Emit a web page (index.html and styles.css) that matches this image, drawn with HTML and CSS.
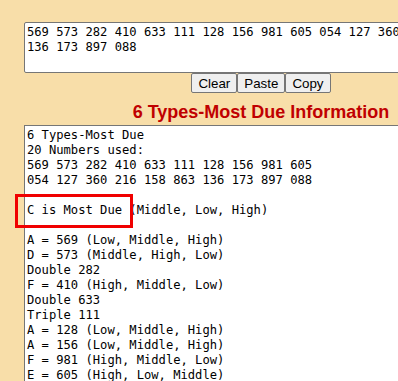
FILE: index.html
```html
<!DOCTYPE html>
<html lang="en">
<head>
  <meta charset="UTF-8" />
  <meta name="viewport" content="width=device-width, initial-scale=1.0"/>
  <title>6 Types-Most Due</title>
  <link rel="stylesheet" href="styles.css">
</head>
<body>
  <div class="container">
    <textarea class="numbers" id="numbers" spellcheck="false">569 573 282 410 633 111 128 156 981 605 054 127 360 216 158 863 136 173 897 088</textarea>

    <div class="buttons">
      <button onclick="document.getElementById('numbers').value = ''">Clear</button>
      <button>Paste</button>
      <button>Copy</button>
    </div>

    <h2>6 Types-Most Due Information</h2>

    <div class="output-wrap">
      <div class="output">6 Types-Most Due
20 Numbers used:
569 573 282 410 633 111 128 156 981 605
054 127 360 216 158 863 136 173 897 088

C is Most Due (Middle, Low, High)

A = 569 (Low, Middle, High)
D = 573 (Middle, High, Low)
Double 282
F = 410 (High, Middle, Low)
Double 633
Triple 111
A = 128 (Low, Middle, High)
A = 156 (Low, Middle, High)
F = 981 (High, Middle, Low)
E = 605 (High, Low, Middle)</div>
      <div class="highlight"></div>
    </div>
  </div>
</body>
</html>
```

FILE: styles.css
```css
:root {
  --bg: #f8dea9;
  --title: #c00000;
  --border: #767676;
  --mark: #f00000;
}

body {
  margin: 0;
  background-color: var(--bg);
  font-family: "Liberation Sans", Arial, sans-serif;
  overflow: hidden;
}

.container {
  width: 474px;
  padding: 22px 0 0 24px;
}

.numbers, .output {
  display: block;
  width: 100%;
  box-sizing: border-box;
  margin: 0;
  padding: 2px;
  border: 1px solid var(--border);
  background: #fff;
  color: #000;
  font-family: "DejaVu Sans Mono", monospace;
  font-size: 12.15px;
  line-height: 15px;
}

.numbers {
  height: 51px;
  resize: none;
  overflow: hidden;
  border-radius: 2px;
}

.buttons {
  display: flex;
  justify-content: center;
}

.buttons button {
  height: 20px;
  padding: 0 6px;
  margin: 0;
  border: 1px solid var(--border);
  border-radius: 2px;
  background: #efefef;
  color: #000;
  font-family: "Liberation Sans", Arial, sans-serif;
  font-size: 13.33px;
}

h2 {
  margin: 9px 0 2px;
  text-align: center;
  color: var(--title);
  font-size: 18px;
  line-height: 21px;
  font-weight: bold;
}

.output-wrap {
  position: relative;
}

.output {
  white-space: pre;
  height: 270px;
  overflow: hidden;
}

/* annotation box over the "most due" line */
.highlight {
  position: absolute;
  left: -9px;
  top: 69px;
  width: 112px;
  height: 28px;
  border: 3px solid var(--mark);
}
```
